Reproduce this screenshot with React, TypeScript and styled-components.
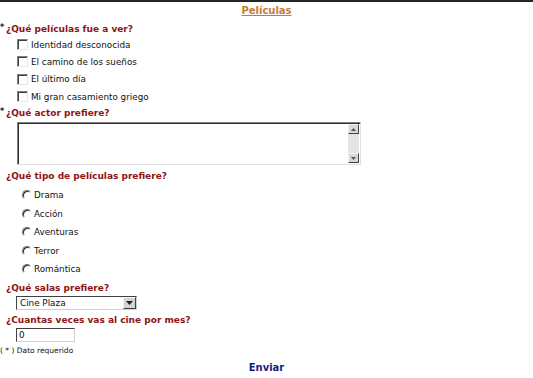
import styled, { createGlobalStyle } from "styled-components";

const peliculas = [
    "Identidad desconocida",
    "El camino de los sueños",
    "El último día",
    "Mi gran casamiento griego",
];

const tipos = ["Drama", "Acción", "Aventuras", "Terror", "Romántica"];

const App = () => {
    return (
        <Page>
            <GlobalStyle />
            <Title>Películas</Title>

            <Form onSubmit={(e) => e.preventDefault()}>
                <Question $top={1}>
                    <Marker>*</Marker>¿Qué películas fue a ver?
                </Question>
                <OptionList>
                    {peliculas.map((p) => (
                        <Option key={p} $height={17.3} $indent={17} $gap={3}>
                            <Check type="checkbox" />
                            {p}
                        </Option>
                    ))}
                </OptionList>

                <Question $top={0}>
                    <Marker>*</Marker>¿Qué actor prefiere?
                </Question>
                <TextBox>
                    <TextArea />
                    <ScrollBar>
                        <ScrollButton>
                            <svg width="5" height="3" viewBox="0 0 5 3">
                                <path d="M2.5 0 L5 3 L0 3 Z" fill="#555" />
                            </svg>
                        </ScrollButton>
                        <ScrollButton>
                            <svg width="5" height="3" viewBox="0 0 5 3">
                                <path d="M0 0 L5 0 L2.5 3 Z" fill="#555" />
                            </svg>
                        </ScrollButton>
                    </ScrollBar>
                </TextBox>

                <Question $top={4}>
                    <Marker />¿Qué tipo de películas prefiere?
                </Question>
                <OptionList $top={3}>
                    {tipos.map((t) => (
                        <Option key={t} $height={18.5} $indent={22} $gap={2}>
                            <Radio type="radio" name="tipo" />
                            {t}
                        </Option>
                    ))}
                </OptionList>

                <Question $top={2}>
                    <Marker />¿Qué salas prefiere?
                </Question>
                <SelectBox>
                    <SelectValue>Cine Plaza</SelectValue>
                    <DropButton>
                        <svg width="7" height="4" viewBox="0 0 7 4">
                            <path d="M0 0 L7 0 L3.5 4 Z" fill="#222" />
                        </svg>
                    </DropButton>
                </SelectBox>

                <Question $top={3}>
                    <Marker />¿Cuantas veces vas al cine por mes?
                </Question>
                <NumberInput type="text" defaultValue="0" />

                <Footnote>( * ) Dato requerido</Footnote>

                <Submit type="submit">Enviar</Submit>
            </Form>
        </Page>
    );
};

const GlobalStyle = createGlobalStyle`
    body {
        margin: 0;
        background: #ffffff;
        font-family: "DejaVu Sans", Verdana, sans-serif;
    }
`;

const Page = styled.div`
    border-top: 2px solid #262626;
    display: flex;
    flex-direction: column;
`;

const Title = styled.h1`
    margin: 0;
    text-align: center;
    font-size: 10px;
    font-weight: bold;
    line-height: 18px;
    color: #c97b36;
    text-decoration: underline;
`;

const Form = styled.form`
    display: flex;
    flex-direction: column;
    align-items: flex-start;
`;

const Question = styled.div<{ $top: number }>`
    margin-top: ${(p) => p.$top}px;
    font-size: 9px;
    font-weight: bold;
    line-height: 14px;
    color: #8e1414;
`;

const Marker = styled.span`
    display: inline-block;
    width: 6px;
    font-size: 8px;
    color: #222;
    vertical-align: 2px;
`;

const OptionList = styled.div<{ $top?: number }>`
    margin-top: ${(p) => p.$top ?? 0}px;
    display: flex;
    flex-direction: column;
`;

const Option = styled.label<{ $height: number; $indent: number; $gap: number }>`
    display: flex;
    align-items: center;
    gap: ${(p) => p.$gap}px;
    height: ${(p) => p.$height}px;
    padding-left: ${(p) => p.$indent}px;
    font-size: 8.8px;
    color: #111;
`;

const Check = styled.input`
    appearance: none;
    margin: 0;
    width: 11px;
    height: 11px;
    box-sizing: border-box;
    background: #fff;
    border: 1px solid;
    border-color: #808080 #e8e8e8 #e8e8e8 #808080;
    box-shadow: inset 1px 1px 0 #404040;
`;

const Radio = styled.input`
    appearance: none;
    margin: 0;
    width: 10px;
    height: 10px;
    box-sizing: border-box;
    border-radius: 50%;
    background: #fff;
    border: 1px solid;
    border-color: #707070 #ffffff #ffffff #707070;
    box-shadow: inset 1px 1px 0 #303030;
`;

const TextBox = styled.div`
    margin-top: 2px;
    margin-left: 17px;
    width: 344px;
    height: 43px;
    box-sizing: border-box;
    display: flex;
    border: 1px solid;
    border-color: #808080 #e0e0e0 #e0e0e0 #808080;
    box-shadow: inset 1px 1px 0 #303030;
    background: #fff;
`;

const TextArea = styled.textarea`
    flex: 1;
    border: none;
    resize: none;
    outline: none;
    background: transparent;
    margin: 1px 0 0 1px;
`;

const ScrollBar = styled.div`
    width: 11px;
    margin: 1px 1px 1px 0;
    display: flex;
    flex-direction: column;
    justify-content: space-between;
    background: #e4e4e4;
`;

const ScrollButton = styled.div`
    height: 10px;
    box-sizing: border-box;
    display: flex;
    align-items: center;
    justify-content: center;
    background: #d8d8d8;
    border: 1px solid;
    border-color: #f4f4f4 #404040 #404040 #f4f4f4;
`;

const SelectBox = styled.div`
    margin-top: 1px;
    margin-left: 16px;
    width: 121px;
    height: 14px;
    box-sizing: border-box;
    display: flex;
    align-items: stretch;
    border: 1px solid;
    border-color: #404040 #d0d0d0 #d0d0d0 #404040;
    background: #fff;
`;

const SelectValue = styled.span`
    flex: 1;
    padding-left: 3px;
    font-size: 8.8px;
    line-height: 12px;
    color: #111;
`;

const DropButton = styled.span`
    width: 11px;
    display: flex;
    align-items: center;
    justify-content: center;
    background: #d4d4d4;
    border: 1px solid;
    border-color: #f4f4f4 #404040 #404040 #f4f4f4;
`;

const NumberInput = styled.input`
    margin: 1px 0 0 16px;
    width: 59px;
    height: 14px;
    box-sizing: border-box;
    padding: 0 2px;
    font-family: "DejaVu Sans", Verdana, sans-serif;
    font-size: 8.8px;
    color: #111;
    border: 1px solid;
    border-color: #404040 #d0d0d0 #d0d0d0 #404040;
    outline: none;
`;

const Footnote = styled.div`
    margin-top: 4px;
    font-size: 7.5px;
    line-height: 10px;
    color: #111;
`;

const Submit = styled.button`
    align-self: center;
    margin-top: 5px;
    padding: 0;
    border: none;
    background: none;
    font-family: "DejaVu Sans", Verdana, sans-serif;
    font-size: 10px;
    font-weight: bold;
    line-height: 14px;
    color: #1c1c7c;
    cursor: pointer;
`;

export default App;
